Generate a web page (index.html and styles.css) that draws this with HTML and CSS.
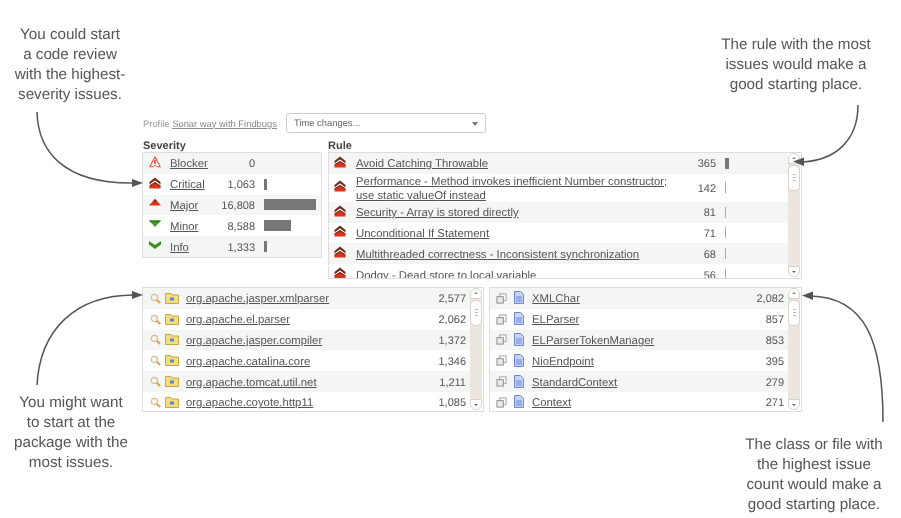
FILE: index.html
```html
<!DOCTYPE html>
<html lang="en">
  <head>
    <meta charset="UTF-8" />
    <title>Sonar issues drilldown</title>
    <link rel="stylesheet" href="styles.css">
  </head>
  <body>
    <svg class="defs" width="0" height="0">
      <symbol id="i-blocker" viewBox="0 0 14 14">
        <path d="M7 1 L13 12.5 H8.5 M5.5 12.5 H1 L7 1" fill="#fff" stroke="#e0533f" stroke-width="1.3"/>
        <path d="M7 4.5 V9 M7 10.2 V11.8" stroke="#d22" stroke-width="1.6"/>
      </symbol>
      <symbol id="i-critical" viewBox="0 0 12 12">
        <path d="M6 0.5 L11.5 5 V7.5 L6 3.4 L0.5 7.5 V5 Z" fill="#6f2a1c"/>
        <path d="M6 3.6 L11.5 7.7 V8.2 L6 4.8 L0.5 8.2 V7.7 Z" fill="#fff"/>
        <path d="M6 5 L11.5 8.6 V11.5 H0.5 V8.6 Z" fill="#d8331c"/>
        <path d="M6 5 L11.5 8.6 V9.6 L6 6.2 L0.5 9.6 V8.6 Z" fill="#7c2a1a"/>
      </symbol>
      <symbol id="i-major" viewBox="0 0 12 12">
        <path d="M6 2 L12 8.5 H0 Z" fill="#d8331c"/>
        <path d="M6 2 L8.5 4.7 H3.5 Z" fill="#96281a"/>
      </symbol>
      <symbol id="i-minor" viewBox="0 0 12 12">
        <path d="M0 2.5 H12 L6 9 Z" fill="#4f9a2a"/>
        <path d="M0 2.5 H12 L10.5 4.2 H1.5 Z" fill="#2f7a16"/>
      </symbol>
      <symbol id="i-info" viewBox="0 0 12 12">
        <path d="M0 2 L6 6 L12 2 V5.5 L6 10 L0 5.5 Z" fill="#3d8f1e"/>
      </symbol>
      <symbol id="i-search" viewBox="0 0 12 12">
        <circle cx="4.8" cy="4.8" r="3.4" fill="#f8f4e8" stroke="#d2bd9a" stroke-width="1.3"/>
        <path d="M7.4 7.4 L11 11" stroke="#e3a050" stroke-width="2.2"/>
      </symbol>
      <symbol id="i-folder" viewBox="0 0 14 12">
        <path d="M0.5 1.5 H6 L7 3 H13.5 V11.5 H0.5 Z" fill="#f3de78" stroke="#bfa850"/>
        <rect x="5" y="5.5" width="4" height="3" fill="#5f86d2"/>
      </symbol>
      <symbol id="i-copy" viewBox="0 0 12 12">
        <rect x="4" y="1" width="7" height="7" fill="#fff" stroke="#999"/>
        <rect x="1" y="4" width="7" height="7" fill="#e8e8e8" stroke="#888"/>
      </symbol>
      <symbol id="i-file" viewBox="0 0 10 13">
        <path d="M0.5 0.5 H6.5 L9.5 3.5 V12.5 H0.5 Z" fill="#c8d4f6" stroke="#6f86d8"/>
        <path d="M2 6 H8 M2 8 H8 M2 10 H8" stroke="#6f86d8"/>
      </symbol>
    </svg>

    <main class="report">
      <div class="toolbar">
        <span class="profile">Profile <a href="#">Sonar way with Findbugs</a></span>
        <div class="select">Time changes...<span class="select-arrow"></span></div>
      </div>

      <div class="top-grid">
        <section>
          <h3 class="heading-severity">Severity</h3>
          <div class="box box-severity">
            <div class="list">
              <div class="row"><svg class="icon icon-blocker"><use href="#i-blocker"/></svg><a class="name" href="#">Blocker</a><span class="count">0</span></div>
              <div class="row"><svg class="icon"><use href="#i-critical"/></svg><a class="name" href="#">Critical</a><span class="count">1,063</span><span class="bar" style="width:3px"></span></div>
              <div class="row"><svg class="icon"><use href="#i-major"/></svg><a class="name" href="#">Major</a><span class="count">16,808</span><span class="bar" style="width:52px"></span></div>
              <div class="row"><svg class="icon"><use href="#i-minor"/></svg><a class="name" href="#">Minor</a><span class="count">8,588</span><span class="bar" style="width:27px"></span></div>
              <div class="row"><svg class="icon"><use href="#i-info"/></svg><a class="name" href="#">Info</a><span class="count">1,333</span><span class="bar" style="width:3px"></span></div>
            </div>
          </div>
        </section>
        <section>
          <h3>Rule</h3>
          <div class="box box-rule">
            <div class="list">
              <div class="row"><svg class="icon"><use href="#i-critical"/></svg><a class="name" href="#">Avoid Catching Throwable</a><span class="count">365</span><span class="bar" style="width:4px"></span></div>
              <div class="row row-tall"><svg class="icon"><use href="#i-critical"/></svg><a class="name" href="#">Performance - Method invokes inefficient Number constructor; use static valueOf instead</a><span class="count">142</span><span class="bar bar-thin"></span></div>
              <div class="row"><svg class="icon"><use href="#i-critical"/></svg><a class="name" href="#">Security - Array is stored directly</a><span class="count">81</span><span class="bar bar-thin"></span></div>
              <div class="row"><svg class="icon"><use href="#i-critical"/></svg><a class="name" href="#">Unconditional If Statement</a><span class="count">71</span><span class="bar bar-thin"></span></div>
              <div class="row"><svg class="icon"><use href="#i-critical"/></svg><a class="name" href="#">Multithreaded correctness - Inconsistent synchronization</a><span class="count">68</span><span class="bar bar-thin"></span></div>
              <div class="row"><svg class="icon"><use href="#i-critical"/></svg><a class="name" href="#">Dodgy - Dead store to local variable</a><span class="count">56</span><span class="bar bar-thin"></span></div>
            </div>
            <div class="scroll"><span class="scroll-btn scroll-up"></span><span class="scroll-track"><span class="scroll-thumb"></span></span><span class="scroll-btn scroll-down"></span></div>
          </div>
        </section>
      </div>

      <div class="bottom-grid">
        <div class="box box-packages">
          <div class="list">
            <div class="row"><svg class="icon-a"><use href="#i-search"/></svg><svg class="icon-b"><use href="#i-folder"/></svg><a class="name" href="#">org.apache.jasper.xmlparser</a><span class="count">2,577</span></div>
            <div class="row"><svg class="icon-a"><use href="#i-search"/></svg><svg class="icon-b"><use href="#i-folder"/></svg><a class="name" href="#">org.apache.el.parser</a><span class="count">2,062</span></div>
            <div class="row"><svg class="icon-a"><use href="#i-search"/></svg><svg class="icon-b"><use href="#i-folder"/></svg><a class="name" href="#">org.apache.jasper.compiler</a><span class="count">1,372</span></div>
            <div class="row"><svg class="icon-a"><use href="#i-search"/></svg><svg class="icon-b"><use href="#i-folder"/></svg><a class="name" href="#">org.apache.catalina.core</a><span class="count">1,346</span></div>
            <div class="row"><svg class="icon-a"><use href="#i-search"/></svg><svg class="icon-b"><use href="#i-folder"/></svg><a class="name" href="#">org.apache.tomcat.util.net</a><span class="count">1,211</span></div>
            <div class="row"><svg class="icon-a"><use href="#i-search"/></svg><svg class="icon-b"><use href="#i-folder"/></svg><a class="name" href="#">org.apache.coyote.http11</a><span class="count">1,085</span></div>
          </div>
          <div class="scroll"><span class="scroll-btn scroll-up"></span><span class="scroll-track"><span class="scroll-thumb"></span></span><span class="scroll-btn scroll-down"></span></div>
        </div>
        <div class="box box-classes">
          <div class="list">
            <div class="row"><svg class="icon-a"><use href="#i-copy"/></svg><svg class="icon-c"><use href="#i-file"/></svg><a class="name" href="#">XMLChar</a><span class="count">2,082</span></div>
            <div class="row"><svg class="icon-a"><use href="#i-copy"/></svg><svg class="icon-c"><use href="#i-file"/></svg><a class="name" href="#">ELParser</a><span class="count">857</span></div>
            <div class="row"><svg class="icon-a"><use href="#i-copy"/></svg><svg class="icon-c"><use href="#i-file"/></svg><a class="name" href="#">ELParserTokenManager</a><span class="count">853</span></div>
            <div class="row"><svg class="icon-a"><use href="#i-copy"/></svg><svg class="icon-c"><use href="#i-file"/></svg><a class="name" href="#">NioEndpoint</a><span class="count">395</span></div>
            <div class="row"><svg class="icon-a"><use href="#i-copy"/></svg><svg class="icon-c"><use href="#i-file"/></svg><a class="name" href="#">StandardContext</a><span class="count">279</span></div>
            <div class="row"><svg class="icon-a"><use href="#i-copy"/></svg><svg class="icon-c"><use href="#i-file"/></svg><a class="name" href="#">Context</a><span class="count">271</span></div>
          </div>
          <div class="scroll"><span class="scroll-btn scroll-up"></span><span class="scroll-track"><span class="scroll-thumb"></span></span><span class="scroll-btn scroll-down"></span></div>
        </div>
      </div>
    </main>

    <svg class="arrows" width="901" height="518" viewBox="0 0 901 518">
      <path d="M37 112 C38 150 62 184 134 183"/>
      <polygon points="143,183 132,179 132,187"/>
      <path d="M858 105 C858 140 836 160 803 162"/>
      <polygon points="793,161.5 804,157.5 804,166"/>
      <path d="M37 385 C40 330 75 295 134 295"/>
      <polygon points="143,295 132,291 132,299"/>
      <path d="M883 422 C883 340 865 297 810 296"/>
      <polygon points="802,295.5 813,291.5 813,300"/>
    </svg>

    <p class="note note-severity">You could start<br>a code review<br>with the highest-<br>severity issues.</p>
    <p class="note note-rule">The rule with the most<br>issues would make a<br>good starting place.</p>
    <p class="note note-package">You might want<br>to start at the<br>package with the<br>most issues.</p>
    <p class="note note-class">The class or file with<br>the highest issue<br>count would make a<br>good starting place.</p>
  </body>
</html>
```

FILE: styles.css
```css
* {
  box-sizing: border-box;
  font-family: "Liberation Sans", Arial, sans-serif;
}

body {
  height: 518px;
  margin: 0;
  overflow: hidden;
  background-color: white;
  text-rendering: geometricPrecision;
  filter: blur(0.4px);
}

.defs {
  position: absolute;
}

.report {
  width: 660px;
  margin-left: 142px;
  padding-top: 113px;
  color: #555;
  font-size: 11px;
}

a {
  color: #555;
}

.toolbar {
  display: flex;
  align-items: center;
  height: 20px;
}

.profile {
  width: 144px;
  padding-left: 1px;
  color: #999;
  font-size: 9.4px;
  white-space: nowrap;
}

.profile a {
  color: #888;
}

.select {
  position: relative;
  width: 200px;
  height: 20px;
  padding: 0 7px;
  border: 1px solid #ccc;
  border-radius: 3px;
  color: #666;
  font-size: 9.4px;
  line-height: 18px;
}

.select-arrow {
  position: absolute;
  top: 8px;
  right: 7px;
  border-style: solid;
  border-width: 4px 3px 0;
  border-color: #777 transparent transparent;
}

.top-grid {
  display: grid;
  grid-template-columns: 180px 474px;
  column-gap: 6px;
  margin-top: 7px;
}

.bottom-grid {
  display: grid;
  grid-template-columns: 342px 313px;
  column-gap: 5px;
  margin-top: 8px;
}

h3 {
  margin: 0;
  height: 12px;
  color: #444;
  font-size: 11px;
  line-height: 12px;
}

.heading-severity {
  padding-left: 1px;
}

.box {
  display: flex;
  border: 1px solid #ddd;
  overflow: hidden;
}

.box-severity {
  height: 106px;
}

.box-rule {
  height: 127px;
}

.box-packages,
.box-classes {
  height: 125px;
}

.list {
  flex: 1;
  min-width: 0;
}

.row {
  display: flex;
  align-items: center;
  height: 20.8px;
  padding-top: 2px;
}

.row:nth-child(odd) {
  background-color: #f3f6f2;
}

.row-tall {
  height: 28px;
  line-height: 14px;
}

.name {
  flex: none;
  font-size: 11.35px;
}

.count {
  flex: none;
  text-align: right;
}

.bar {
  flex: none;
  height: 11px;
  margin-top: -2px;
  margin-left: 9px;
  background-color: #777;
}

.bar-thin {
  width: 1px;
  background-color: #aaa;
}

.icon {
  flex: none;
  width: 12px;
  height: 12px;
  margin-top: -5px;
}

.box-severity .row {
  padding-left: 6px;
}

.box-severity .icon {
  margin-right: 9px;
}

.box-severity .icon-blocker {
  height: 14px;
}

.box-severity .name {
  width: 50px;
}

.box-severity .count {
  width: 35px;
}

.box-rule .row {
  padding-left: 5px;
}

.box-rule .icon {
  margin-right: 10px;
}

.box-rule .name {
  width: 320px;
}

.box-rule .count {
  width: 40px;
}

.box-packages .row {
  padding-left: 7px;
  padding-right: 4px;
}

.box-classes .row {
  padding-left: 6px;
  padding-right: 4px;
}

.box-packages .name,
.box-classes .name {
  flex: 1;
}

.icon-a {
  flex: none;
  width: 11px;
  height: 11px;
  margin-top: -2px;
  margin-right: 4px;
}

.box-classes .icon-a {
  margin-right: 7px;
}

.icon-b {
  flex: none;
  width: 14px;
  height: 12px;
  margin-top: -3px;
  margin-right: 7px;
}

.icon-c {
  flex: none;
  width: 10px;
  height: 13px;
  margin-top: -3px;
  margin-right: 8px;
}

.scroll {
  flex: none;
  display: flex;
  flex-direction: column;
  width: 13px;
  padding: 0 1px 1px 0;
}

.scroll-btn {
  position: relative;
  flex: none;
  height: 11px;
  border: 1px solid #d8d2c8;
  background-color: white;
}

.scroll-up {
  border-radius: 6px 6px 0 0;
}

.scroll-down {
  border-radius: 0 0 6px 6px;
}

.scroll-btn::after {
  content: "";
  position: absolute;
  left: 3px;
  border-style: solid;
  border-color: transparent;
}

.scroll-up::after {
  top: 3px;
  border-width: 0 2px 2px;
  border-bottom-color: #888;
}

.scroll-down::after {
  top: 4px;
  border-width: 2px 2px 0;
  border-top-color: #666;
}

.scroll-track {
  flex: 1;
  padding-top: 1px;
  background-color: #ebe6e0;
}

.scroll-thumb {
  position: relative;
  display: block;
  height: 26px;
  border: 1px solid #d8d2c8;
  border-radius: 5px;
  background-color: white;
}

.scroll-thumb::after {
  content: "";
  position: absolute;
  top: 8px;
  left: 4px;
  width: 3px;
  height: 7px;
  background: repeating-linear-gradient(#bbb 0 1px, transparent 1px 3px);
}

.arrows {
  position: absolute;
  top: 0;
  left: 0;
}

.arrows path {
  fill: none;
  stroke: #555;
  stroke-width: 1.5;
}

.arrows polygon {
  fill: #555;
}

.note {
  position: absolute;
  margin: 0;
  color: #555;
  font-size: 15.2px;
  line-height: 20px;
  text-align: center;
  white-space: nowrap;
}

.note-severity {
  top: 25px;
  left: 0;
  width: 140px;
}

.note-rule {
  top: 35px;
  left: 696px;
  width: 200px;
}

.note-package {
  top: 393px;
  left: 0;
  width: 142px;
}

.note-class {
  top: 435px;
  left: 714px;
  width: 200px;
}
```
